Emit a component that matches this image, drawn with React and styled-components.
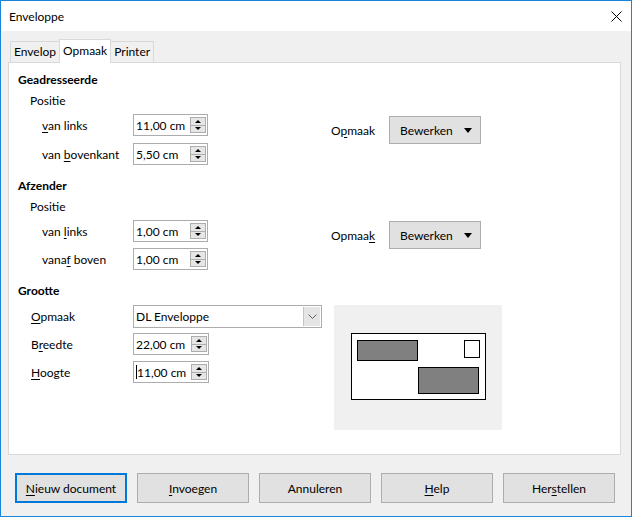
import React from "react";
import styled, { createGlobalStyle } from "styled-components";

const GlobalStyle = createGlobalStyle`
  html, body {
    margin: 0;
    padding: 0;
    background: #fff;
  }
  body {
    font-family: Lato, "Noto Sans", sans-serif;
    font-size: 12px;
    color: #000;
  }
`;

const Window = styled.div`
  width: 632px;
  height: 517px;
  box-sizing: border-box;
  border: 1px solid #1883d7;
  background: #f0f0f0;
  display: flex;
  flex-direction: column;
`;

const TitleBar = styled.div`
  height: 30px;
  flex: 0 0 30px;
  background: #fff;
  display: flex;
  align-items: center;
  justify-content: space-between;
  padding: 0 9px 0 8px;
`;

const Title = styled.span`
  font-size: 12px;
`;

const TabStrip = styled.div`
  display: flex;
  align-items: flex-end;
  margin: 8px 0 0 9px;
  height: 23px;
`;

const Tab = styled.div`
  box-sizing: border-box;
  height: ${(p) => (p.$active ? "24px" : "21px")};
  line-height: ${(p) => (p.$active ? "22px" : "20px")};
  padding: 0 3px;
  border: 1px solid #d9d9d9;
  border-bottom: none;
  background: ${(p) => (p.$active ? "#fff" : "#f0f0f0")};
  margin-left: ${(p) => (p.$active ? "-1px" : "0")};
  margin-right: ${(p) => (p.$active ? "-1px" : "0")};
  margin-bottom: ${(p) => (p.$active ? "-1px" : "0")};
  position: relative;
  z-index: ${(p) => (p.$active ? 2 : 1)};
`;

const Panel = styled.div`
  box-sizing: border-box;
  height: 393px;
  margin: 0 10px 0 7px;
  border: 1px solid #d9d9d9;
  background: #fff;
  padding: 7px 0 0 9px;
  display: flex;
  flex-direction: column;
`;

const Section = styled.div`
  display: flex;
  flex-direction: column;
  margin-top: ${(p) => p.$top || 0}px;
`;

const Heading = styled.div`
  font-weight: bold;
  height: 21px;
  line-height: 20px;
`;

const SubHeading = styled.div`
  height: 20px;
  line-height: 20px;
  padding-left: 12px;
`;

const SectionBody = styled.div`
  display: flex;
  align-items: flex-start;
`;

const Column = styled.div`
  width: ${(p) => p.$width}px;
  display: flex;
  flex-direction: column;
  gap: ${(p) => p.$gap}px;
  padding-top: ${(p) => p.$pad || 0}px;
`;

const FieldRow = styled.div`
  display: flex;
  align-items: center;
  height: 22px;
  padding-left: ${(p) => p.$indent}px;
`;

const FieldLabel = styled.div`
  width: ${(p) => p.$width}px;
  flex: 0 0 auto;
`;

const Key = styled.span`
  text-decoration: underline;
  text-underline-offset: 2px;
`;

const SpinField = styled.div`
  box-sizing: border-box;
  width: 76px;
  height: 22px;
  border: 1px solid #acacac;
  background: #fff;
  display: flex;
  align-items: center;
`;

const FieldText = styled.div`
  flex: 1;
  padding-left: 2px;
  white-space: nowrap;
  display: flex;
  align-items: center;
`;

const Caret = styled.span`
  display: inline-block;
  width: 1px;
  height: 14px;
  background: #000;
`;

const SpinBox = styled.div`
  width: 16px;
  height: 16px;
  margin-right: 1px;
  display: flex;
  flex-direction: column;
`;

const SpinButton = styled.div`
  box-sizing: border-box;
  flex: 1;
  border: 1px solid #adadad;
  margin-top: ${(p) => (p.$down ? "-1px" : "0")};
  background: #e6e6e6;
  display: flex;
  align-items: center;
  justify-content: center;
  &::after {
    content: "";
    border-left: 3px solid transparent;
    border-right: 3px solid transparent;
    ${(p) =>
      p.$down ? "border-top: 3px solid #000;" : "border-bottom: 3px solid #000;"}
  }
`;

const RightGroup = styled.div`
  display: flex;
  align-items: center;
  margin-left: 123px;
  padding-top: ${(p) => p.$pad}px;
`;

const OptLabel = styled.div`
  width: 58px;
`;

const MenuButton = styled.div`
  box-sizing: border-box;
  width: 92px;
  height: 28px;
  border: 1px solid #adadad;
  background: #e1e1e1;
  display: flex;
  align-items: center;
  padding: 0 8px 0 10px;
  justify-content: space-between;
  &::after {
    content: "";
    border-left: 4px solid transparent;
    border-right: 4px solid transparent;
    border-top: 5px solid #000;
  }
`;

const Combo = styled.div`
  box-sizing: border-box;
  width: 189px;
  height: 23px;
  border: 1px solid #acacac;
  background: #fff;
  display: flex;
  align-items: stretch;
`;

const ComboText = styled.div`
  flex: 1;
  padding-left: 2px;
  display: flex;
  align-items: center;
`;

const ComboArrow = styled.div`
  width: 16px;
  margin: 1px;
  border-left: 1px solid #c4c4c4;
  background: #e5e5e5;
  display: flex;
  align-items: center;
  justify-content: center;
`;

const Preview = styled.div`
  box-sizing: border-box;
  width: 168px;
  height: 125px;
  margin-left: 12px;
  margin-top: 3px;
  background: #f0f0f0;
  padding: 28px 0 0 17px;
`;

const ButtonRow = styled.div`
  display: flex;
  gap: 10px;
  margin: 18px 0 0 14px;
`;

const Button = styled.div`
  box-sizing: border-box;
  width: 112px;
  height: 30px;
  border: ${(p) => (p.$default ? "2px solid #0078d7" : "1px solid #adadad")};
  background: #e1e1e1;
  display: flex;
  align-items: center;
  justify-content: center;
`;

const Spin = ({ value, caret }) => (
  <SpinField>
    <FieldText>
      {caret && <Caret />}
      {value}
    </FieldText>
    <SpinBox>
      <SpinButton />
      <SpinButton $down />
    </SpinBox>
  </SpinField>
);

const CloseIcon = () => (
  <svg width="11" height="11" viewBox="0 0 11 11">
    <path d="M0.5 0.5 L10.5 10.5 M10.5 0.5 L0.5 10.5" stroke="#000" strokeWidth="1" />
  </svg>
);

const Chevron = () => (
  <svg width="9" height="5" viewBox="0 0 9 5">
    <path d="M0.5 0.5 L4.5 4.5 L8.5 0.5" stroke="#606060" fill="none" strokeWidth="1" />
  </svg>
);

const EnvelopeDrawing = () => (
  <svg width="135" height="67" viewBox="0 0 135 67">
    <rect x="0.5" y="0.5" width="134" height="66" fill="#fff" stroke="#000" />
    <rect x="6.5" y="7.5" width="60" height="20" fill="#808080" stroke="#000" />
    <rect x="113.5" y="7.5" width="15" height="17" fill="#fff" stroke="#000" />
    <rect x="67.5" y="34.5" width="60" height="26" fill="#808080" stroke="#000" />
  </svg>
);

const Opmaak = ({ children, pad }) => (
  <RightGroup $pad={pad}>
    <OptLabel>{children}</OptLabel>
    <MenuButton>Bewerken</MenuButton>
  </RightGroup>
);

export default function App() {
  return (
    <>
      <GlobalStyle />
      <Window>
        <TitleBar>
          <Title>Enveloppe</Title>
          <CloseIcon />
        </TitleBar>
        <TabStrip>
          <Tab>Envelop</Tab>
          <Tab $active>Opmaak</Tab>
          <Tab>Printer</Tab>
        </TabStrip>
        <Panel>
          <Section>
            <Heading>Geadresseerde</Heading>
            <SectionBody>
              <Column $width={190} $gap={0}>
                <SubHeading>Positie</SubHeading>
                <Column $width={190} $gap={7} $pad={3}>
                  <FieldRow $indent={24}>
                    <FieldLabel $width={91}>
                      <Key>v</Key>an links
                    </FieldLabel>
                    <Spin value="11,00 cm" />
                  </FieldRow>
                  <FieldRow $indent={24}>
                    <FieldLabel $width={91}>
                      van <Key>b</Key>ovenkant
                    </FieldLabel>
                    <Spin value="5,50 cm" />
                  </FieldRow>
                </Column>
              </Column>
              <Opmaak pad={25}>
                O<Key>p</Key>maak
              </Opmaak>
            </SectionBody>
          </Section>

          <Section $top={11}>
            <Heading>Afzender</Heading>
            <SectionBody>
              <Column $width={190} $gap={0}>
                <SubHeading>Positie</SubHeading>
                <Column $width={190} $gap={6} $pad={3}>
                  <FieldRow $indent={24}>
                    <FieldLabel $width={91}>
                      van <Key>l</Key>inks
                    </FieldLabel>
                    <Spin value="1,00 cm" />
                  </FieldRow>
                  <FieldRow $indent={24}>
                    <FieldLabel $width={91}>
                      vana<Key>f</Key> boven
                    </FieldLabel>
                    <Spin value="1,00 cm" />
                  </FieldRow>
                </Column>
              </Column>
              <Opmaak pad={24}>
                Opmaa<Key>k</Key>
              </Opmaak>
            </SectionBody>
          </Section>

          <Section $top={11}>
            <Heading>Grootte</Heading>
            <SectionBody>
              <Column $width={304} $gap={6} $pad={3}>
                <FieldRow $indent={13}>
                  <FieldLabel $width={102}>
                    <Key>O</Key>pmaak
                  </FieldLabel>
                  <Combo>
                    <ComboText>DL Enveloppe</ComboText>
                    <ComboArrow>
                      <Chevron />
                    </ComboArrow>
                  </Combo>
                </FieldRow>
                <FieldRow $indent={13}>
                  <FieldLabel $width={102}>
                    B<Key>r</Key>eedte
                  </FieldLabel>
                  <Spin value="22,00 cm" />
                </FieldRow>
                <FieldRow $indent={13}>
                  <FieldLabel $width={102}>
                    <Key>H</Key>oogte
                  </FieldLabel>
                  <Spin value="11,00 cm" caret />
                </FieldRow>
              </Column>
              <Preview>
                <EnvelopeDrawing />
              </Preview>
            </SectionBody>
          </Section>
        </Panel>
        <ButtonRow>
          <Button $default>
            <span>
              <Key>N</Key>ieuw document
            </span>
          </Button>
          <Button>
            <span>
              <Key>I</Key>nvoegen
            </span>
          </Button>
          <Button>Annuleren</Button>
          <Button>
            <span>
              <Key>H</Key>elp
            </span>
          </Button>
          <Button>
            <span>
              Her<Key>s</Key>tellen
            </span>
          </Button>
        </ButtonRow>
      </Window>
    </>
  );
}
